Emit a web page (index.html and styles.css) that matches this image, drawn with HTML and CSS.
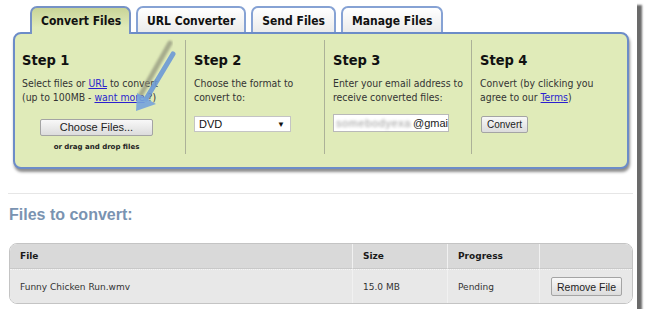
FILE: index.html
```html
<!DOCTYPE html>
<html lang="en">
  <head>
    <meta charset="UTF-8" />
    <title>Convert Files</title>
    <link rel="stylesheet" href="styles.css">
  </head>
  <body>
    <div class="page">
      <div class="tabs">
        <div class="tab active">Convert Files</div>
        <div class="tab">URL Converter</div>
        <div class="tab">Send Files</div>
        <div class="tab">Manage Files</div>
      </div>

      <div class="panel">
        <div class="step step-first">
          <h2>Step 1</h2>
          <p>Select files or <a href="#">URL</a> to convert<br />(up to 100MB - <a href="#">want more</a> ?)</p>
          <div class="choose-wrap">
            <button class="btn btn-choose">Choose Files...</button>
            <div class="drop-note">or drag and drop files</div>
          </div>
        </div>
        <div class="step">
          <h2>Step 2</h2>
          <p>Choose the format to<br />convert to:</p>
          <div class="select">
            <span>DVD</span>
            <span class="select-arrow">&#9660;</span>
          </div>
        </div>
        <div class="step">
          <h2>Step 3</h2>
          <p>Enter your email address to<br />receive converted files:</p>
          <div class="email">
            <span class="blurred">somebodyexa</span><span>@gmai</span>
          </div>
        </div>
        <div class="step">
          <h2>Step 4</h2>
          <p>Convert (by clicking you<br />agree to our <a href="#">Terms</a>)</p>
          <button class="btn btn-convert">Convert</button>
        </div>
      </div>

      <hr class="divider" />

      <h3 class="files-title">Files to convert:</h3>

      <table class="files-table">
        <thead>
          <tr>
            <th class="col-file">File</th>
            <th class="col-size">Size</th>
            <th class="col-progress">Progress</th>
            <th class="col-action"></th>
          </tr>
        </thead>
        <tbody>
          <tr>
            <td>Funny Chicken Run.wmv</td>
            <td>15.0 MB</td>
            <td>Pending</td>
            <td class="action-cell"><button class="btn btn-remove">Remove File</button></td>
          </tr>
        </tbody>
      </table>

      <!-- annotation arrow drawn over the page -->
      <svg class="arrow" width="637" height="309" viewBox="0 0 637 309">
        <defs>
          <filter id="soft"><feGaussianBlur stdDeviation="1.2" /></filter>
        </defs>
        <line x1="170" y1="43" x2="140" y2="96" stroke="#8e927a" stroke-width="5" stroke-linecap="round" opacity="0.7" filter="url(#soft)" />
        <line x1="173" y1="54" x2="146" y2="99" stroke="#6c9ad6" stroke-width="5" stroke-linecap="round" opacity="0.9" />
        <polygon points="136,111 137,93 156,104" fill="#76a3db" opacity="0.9" />
      </svg>
    </div>
  </body>
</html>
```

FILE: styles.css
```css
* {
  margin: 0;
  padding: 0;
  box-sizing: border-box;
}

body {
  background-color: #fff;
  font-family: "DejaVu Sans Condensed", "Liberation Sans", sans-serif;
  color: #333;
}

.page {
  position: relative;
  width: 637px;
  height: 309px;
  background-color: #fff;
  box-shadow: 5px 5px 2px #6a6a6a;
}

/* tabs */

.tabs {
  display: flex;
  gap: 5px;
  padding: 6px 0 0 30px;
  height: 32px;
}

.tab {
  position: relative;
  z-index: 1;
  height: 28px;
  padding: 5px 9px 0;
  border: 2px solid #86a2d4;
  border-bottom: none;
  border-radius: 7px 7px 0 0;
  background: linear-gradient(to bottom, #ffffff, #ebebeb);
  font-size: 12px;
  font-weight: bold;
  line-height: 16px;
  color: #111;
  white-space: nowrap;
}

.tab:not(.active) {
  height: 26px;
}

.tab.active {
  width: 101px;
  border-color: #7692c6;
  background: linear-gradient(to bottom, #c8d497, #e0ebb9 75%);
}

/* step panel */

.panel {
  display: grid;
  grid-template-columns: 170px 139px 147px 1fr;
  margin-left: 13px;
  width: 616px;
  height: 137px;
  padding: 6px 0 15px;
  border: 2px solid #6c8cc8;
  border-radius: 8px;
  background-color: #e0ebb9;
  box-shadow: 1px 3px 3px rgba(0, 0, 0, 0.45);
}

.step {
  padding-left: 8px;
  border-left: 1px solid #acb198;
}

.step-first {
  padding-left: 7px;
  border-left: none;
}

.step h2 {
  margin-top: 11px;
  font-size: 14.5px;
  line-height: 18px;
  color: #111;
}

.step p {
  margin-top: 7px;
  font-size: 10.4px;
  line-height: 14px;
  color: #333;
}

.step a {
  color: #2b1fcf;
}

.btn {
  height: 17px;
  border: 1px solid #a4a4a4;
  border-radius: 2px;
  background: linear-gradient(to bottom, #f8f8f8, #dcdcdc);
  font-family: "Liberation Sans", sans-serif;
  font-size: 11px;
  color: #222;
}

.choose-wrap {
  width: 113px;
  margin: 12px 0 0 18px;
  text-align: center;
}

.btn-choose {
  width: 113px;
}

.drop-note {
  margin-top: 5px;
  font-family: "DejaVu Sans", sans-serif;
  font-size: 7px;
  font-weight: bold;
  line-height: 13px;
  color: #222;
}

.select {
  display: flex;
  justify-content: space-between;
  align-items: center;
  width: 97px;
  height: 16px;
  margin-top: 12px;
  padding: 0 5px 0 4px;
  border: 1px solid #c4c4c4;
  background-color: #fff;
  font-family: "Liberation Sans", sans-serif;
  font-size: 11px;
  color: #111;
}

.select-arrow {
  font-size: 8px;
  color: #111;
}

.email {
  display: flex;
  width: 116px;
  height: 18px;
  margin-top: 10px;
  padding-left: 2px;
  border: 1px solid #b9b9b9;
  background-color: #fff;
  white-space: nowrap;
  font-family: "Liberation Sans", sans-serif;
  font-size: 11px;
  line-height: 16px;
  color: #222;
}

.blurred {
  width: 79px;
  letter-spacing: 0.6px;
  color: #9a9a9a;
  filter: blur(1.4px);
}

.btn-convert {
  width: 47px;
  margin: 12px 0 0 1px;
  font-size: 10px;
}

/* files list */

.divider {
  height: 1px;
  margin: 24px 4px 0 8px;
  border: none;
  background-color: #e6e6e6;
}

.files-title {
  margin: 11px 0 0 9px;
  font-family: "Liberation Sans", sans-serif;
  font-size: 16px;
  line-height: 20px;
  color: #7a93b1;
}

.files-table {
  width: 624px;
  margin: 18px 0 0 9px;
  border: 1px solid #c4c4c4;
  border-radius: 8px;
  border-spacing: 0;
  overflow: hidden;
  font-family: "DejaVu Sans", sans-serif;
  font-size: 9px;
  color: #333;
}

.files-table th {
  height: 25px;
  padding: 0 10px;
  background-color: #d9d9d9;
  border-bottom: 1px solid #c9c9c9;
  text-align: left;
  color: #1a1a1a;
}

.files-table td {
  height: 34px;
  padding: 0 10px;
  background-color: #e8e8e8;
  border-top: 1px dotted #f6f6f6;
}

.files-table th + th,
.files-table td + td {
  border-left: 1px solid #f1f1f1;
}

.col-file {
  width: 342px;
}

.col-size {
  width: 95px;
}

.col-progress {
  width: 92px;
}

.action-cell {
  text-align: right;
}

.btn-remove {
  width: 71px;
  height: 19px;
  font-size: 10.5px;
}

.arrow {
  position: absolute;
  left: 0;
  top: 0;
  pointer-events: none;
}
```
